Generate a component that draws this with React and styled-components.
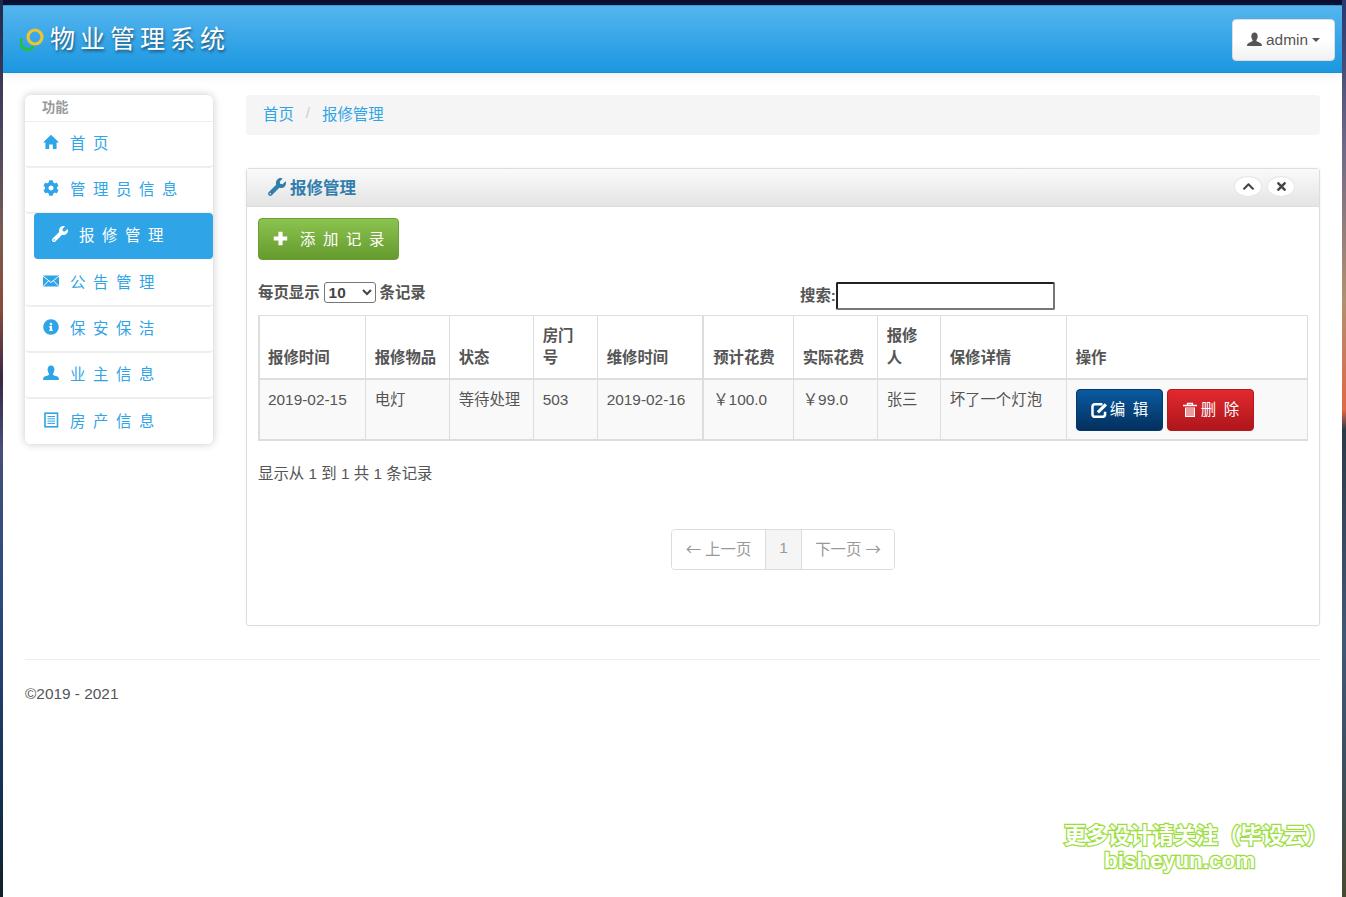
import React from 'react';
import styled, { createGlobalStyle } from 'styled-components';
import { FaCog, FaWrench, FaInfoCircle, FaChevronUp, FaTimes } from 'react-icons/fa';

const Global = createGlobalStyle`
  html, body { margin: 0; padding: 0; height: 100%; }
  body {
    font-family: "Liberation Sans", "Noto Sans CJK SC", sans-serif;
    font-size: 15.4px;
    color: #555;
    overflow: hidden;
    background: #0b1133;
  }
`;
const Desk = styled.div`
  padding: 5px 4px 0 3px;
  height: 897px;
  box-sizing: border-box;
  position: relative;
  background:
    linear-gradient(180deg, #222a50 0, #50485f 150px, #7a5a50 230px, #8a4a3a 310px, #382848 380px, #46507a 450px, #2a4a80 600px, #143050 800px, #10202a 897px) left / 3px 100% no-repeat,
    linear-gradient(180deg, #2a3a70 0, #706a88 150px, #b09070 300px, #e06848 410px, #2a3a48 430px, #37485c 520px, #405878 640px, #3c5060 760px, #4a4a30 897px) right / 4px 100% no-repeat;
`;
const Win = styled.div`
  background: #fff;
  height: 892px;
`;
const Header = styled.header`
  height: 68px;
  box-sizing: border-box;
  background: linear-gradient(180deg, #55b5ee 0%, #1b97e1 100%);
  border-top: 1px solid #2b9ce0;
  border-bottom: 1px solid #178ed6;
  box-shadow: 0 2px 10px rgba(0,0,0,.08);
  display: flex;
  align-items: center;
  justify-content: space-between;
  padding: 0 7px 0 17px;
`;
const Brand = styled.div`
  display: flex;
  align-items: center;
  gap: 4px;
`;
const BrandName = styled.span`
  font-family: "Noto Sans CJK SC", serif;
  font-size: 25px;
  line-height: 34px;
  letter-spacing: 5px;
  padding-bottom: 4px;
  color: #fff;
  text-shadow: 1px 2px 3px rgba(0,0,0,.5);
  font-weight: 400;
`;
const UserBtn = styled.button`
  height: 42px;
  width: 103px;
  margin-top: 1px;
  box-sizing: border-box;
  background: linear-gradient(180deg, #fff 0%, #fff 50%, #f1f1f1 100%);
  border: 1px solid #ddd;
  border-radius: 4px;
  display: flex;
  align-items: center;
  justify-content: center;
  gap: 4px;
  font: inherit;
  color: #555;
  padding: 0;
  svg { width: 15px; height: 15px; flex: none; }
`;
const Caret = styled.i`
  width: 0;
  height: 0;
  border-left: 4px solid transparent;
  border-right: 4px solid transparent;
  border-top: 4px solid #555;
`;
const Layout = styled.div`
  display: flex;
  align-items: flex-start;
  gap: 33px;
  padding: 22px 22px 0;
`;
const Side = styled.aside`
  width: 188px;
  flex: none;
  background: #fff;
  border-radius: 6px;
  box-shadow: 0 0 8px rgba(0,0,0,.22);
  overflow: hidden;
`;
const SideHead = styled.div`
  height: 26px;
  line-height: 26px;
  padding-left: 17px;
  font-size: 13.2px;
  font-weight: 700;
  color: #999;
  border-bottom: 1px solid #eee;
`;
const SideItem = styled.a`
  display: flex;
  align-items: center;
  gap: 11px;
  height: 46px;
  box-sizing: border-box;
  padding: 0 0 4px 18px;
  margin: ${p => (p.$active ? '-1px 0 1px 9px' : '0')};
  letter-spacing: 7.6px;
  white-space: nowrap;
  color: ${p => (p.$active ? '#fff' : '#2fa4e7')};
  background: ${p => (p.$active ? '#2fa4e7' : '#fff')};
  border-radius: 4px;
  border-bottom: ${p => (p.$active ? '0' : '2px solid #eee')};
  &:nth-child(5) { height: 47px; }
  &:last-child { border-bottom: 0; height: 45px; }
  svg { flex: none; width: 16px; height: 16px; }
`;
const Main = styled.main`
  flex: 1;
  min-width: 0;
`;
const Crumbs = styled.nav`
  height: 40px;
  box-sizing: border-box;
  background: #f5f5f5;
  border-radius: 4px;
  display: flex;
  align-items: center;
  padding: 0 17px 4px;
  color: #2fa4e7;
`;
const CrumbSep = styled.span`
  color: #ccc;
  padding: 0 12px;
`;
const Panel = styled.section`
  margin-top: 33px;
  height: 458px;
  box-sizing: border-box;
  border: 1px solid #ddd;
  border-radius: 3px;
  box-shadow: 0 0 3px rgba(0,0,0,.06);
`;
const PanelHead = styled.div`
  height: 38px;
  box-sizing: border-box;
  display: flex;
  align-items: center;
  justify-content: space-between;
  padding: 0 24px 2px 21px;
  background: linear-gradient(180deg, #fafafa 0%, #e4e4e4 100%);
  border-bottom: 1px solid #ddd;
`;
const PanelTitle = styled.h2`
  margin: 0;
  display: flex;
  align-items: center;
  gap: 4px;
  font-size: 16.5px;
  font-weight: 700;
  color: #317eac;
  svg { width: 18px; height: 18px; }
`;
const RoundGroup = styled.div`
  display: flex;
  gap: 5px;
`;
const RoundBtn = styled.span`
  width: 28px;
  height: 21px;
  box-sizing: border-box;
  display: flex;
  align-items: center;
  justify-content: center;
  background: #fff;
  border: 1px solid #e6e6e6;
  border-radius: 50%;
  color: #444;
  svg { width: 13px; height: 13px; }
`;
const PanelBody = styled.div`
  padding: 11px;
`;
const AddBtn = styled.a`
  display: inline-flex;
  align-items: center;
  gap: 12px;
  width: 141px;
  height: 42px;
  box-sizing: border-box;
  padding: 0 0 3px 14px;
  color: #fff;
  letter-spacing: 7.6px;
  white-space: nowrap;
  background: linear-gradient(180deg, #8bc34f 0%, #659a2e 100%);
  border: 1px solid #6a9f31;
  border-radius: 4px;
  svg { width: 15px; height: 15px; flex: none; margin-top: 2px; }
`;
const Controls = styled.div`
  display: flex;
  align-items: flex-start;
  margin-top: 22px;
  height: 33px;
  font-weight: 700;
  color: #555;
`;
const LengthBlock = styled.label`
  width: 542px;
  display: flex;
  align-items: center;
  gap: 4px;
  height: 21px;
`;
const ControlText = styled.span`
  padding-bottom: 4px;
`;
const LenSelect = styled.select`
  width: 52px;
  height: 21px;
  box-sizing: border-box;
  font: 700 15.4px "Liberation Sans", sans-serif;
  color: #444;
  background: #fff;
  border: 1px solid #767676;
  border-radius: 3px;
`;
const SearchBlock = styled.label`
  display: flex;
  align-items: center;
  height: 28px;
`;
const SearchInput = styled.input`
  width: 219px;
  height: 28px;
  box-sizing: border-box;
  margin: 0;
  padding: 1px 2px;
  background: #fff;
  border: 2px solid;
  border-color: #222 #777 #777 #222;
  border-radius: 2px;
`;
const Table = styled.table`
  width: 1049px;
  table-layout: fixed;
  border-collapse: collapse;
  border: 2px solid #ddd;
  border-top-width: 1px;
  border-right-width: 1px;
  line-height: 22px;
`;
const Th = styled.th`
  text-align: left;
  vertical-align: bottom;
  padding: 9px 8.8px 9px 9.2px;
  font-weight: 700;
  color: #555;
  background: #fff;
  border: 1px solid #ddd;
  border-bottom: 2px solid #ddd;
  border-left-width: ${p => (p.$thick ? '2px' : '1px')};
  &:first-child { padding-left: 8px; }
`;
const Td = styled.td`
  vertical-align: top;
  padding: 9px 8.8px 8px 9.2px;
  background: #f9f9f9;
  border: 1px solid #ddd;
  color: #555;
  border-left-width: ${p => (p.$thick ? '2px' : '1px')};
  height: 42px;
  &:first-child { padding-left: 8px; }
`;
const ActionCell = styled.div`
  display: flex;
  gap: 4px;
`;
const RowBtn = styled.a`
  width: 87px;
  height: 42px;
  box-sizing: border-box;
  display: inline-flex;
  align-items: center;
  justify-content: center;
  gap: 3px;
  color: #fff;
  letter-spacing: 7.6px;
  white-space: nowrap;
  padding-left: 8px;
  border-radius: 4px;
  background: ${p => (p.$danger
    ? 'linear-gradient(180deg, #e2292f 0%, #ae161b 100%)'
    : 'linear-gradient(180deg, #0a5aa0 0%, #03305e 100%)')};
  border: 1px solid ${p => (p.$danger ? '#b5191e' : '#03386c')};
  svg { width: 16px; height: 16px; flex: none; }
`;
const Info = styled.div`
  margin-top: 22px;
  line-height: 22px;
  color: #555;
`;
const PagerRow = styled.div`
  display: flex;
  justify-content: center;
  margin-top: 44px;
`;
const Pager = styled.ul`
  display: flex;
  margin: 0;
  padding: 0;
  list-style: none;
  height: 41px;
  box-sizing: border-box;
  border: 1px solid #ddd;
  border-radius: 4px;
  color: #999;
  overflow: hidden;
`;
const PagerItem = styled.li`
  width: ${p => p.$w}px;
  display: flex;
  align-items: center;
  justify-content: center;
  gap: 4px;
  padding-bottom: 3px;
  background: ${p => (p.$current ? '#f5f5f5' : '#fff')};
  border-left: ${p => (p.$first ? '0' : '1px solid #ddd')};
  box-sizing: border-box;
`;
const Arrow = styled.span`
  font-family: "Noto Sans CJK SC", sans-serif;
`;
const Rule = styled.hr`
  margin: 33px 0 0;
  border: 0;
  border-top: 1px solid #eee;
`;
const Foot = styled.footer`
  margin-top: 23px;
  line-height: 22px;
  color: #555;
`;
const FooterWrap = styled.div`
  padding: 0 22px;
`;
const Watermark = styled.div`
  position: absolute;
  left: 1064px;
  top: 819px;
  width: 256px;
  font-family: "Noto Sans CJK SC", sans-serif;
  font-weight: 700;
  color: #fff;
  -webkit-text-stroke: 2.5px #9ade3c;
  paint-order: stroke fill;
  white-space: nowrap;
`;
const WmLine = styled.div`
  font-size: 22px;
  line-height: 29px;
`;
const WmUrl = styled.div`
  font-family: "Liberation Sans", sans-serif;
  font-size: 22.5px;
  line-height: 26px;
  padding-left: 40px;
`;

const Home = () => (
  <svg viewBox="0 0 16 16" fill="currentColor"><path d="M8 .8 16 8.4h-2.4V15H9.8v-4.6H6.2V15H2.4V8.4H0z" /></svg>
);
const Mail = () => (
  <svg viewBox="0 0 16 16"><rect y="2.5" width="16" height="11" fill="currentColor" /><path d="M0 3l8 6.5L16 3M0 13.500l5.800-6M16 13.500l-5.800-6" fill="none" stroke="#fff" strokeWidth="1" /></svg>
);
const Bust = () => (
  <svg viewBox="0 0 16 16" fill="currentColor"><path d="M8 .5c2.400 0 3.500 2 3.400 4.300-.1 2-1 3.300-1.500 4.100 0 1 1.200 1.500 3.100 2.200 2 .8 3 1.400 3 3.900H0c0-2.500 1-3.100 3-3.900 1.900-.7 3.100-1.200 3.100-2.200-.5-.8-1.400-2.100-1.500-4.100C4.500 2.500 5.600.5 8 .5z" /></svg>
);
const Ledger = () => (
  <svg viewBox="0 0 16 16" fill="none" stroke="currentColor"><rect x="2" y="1.200" width="12.500" height="13.600" strokeWidth="1.600" /><path d="M4.500 4.500h7.500M4.500 6.800h7.500M4.500 9.100h7.500M4.500 11.400h7.500" strokeWidth="1" /></svg>
);
const Plus = () => (
  <svg viewBox="0 0 16 16" fill="currentColor"><path d="M5.800.8h4.400v5h5v4.400h-5v5H5.800v-5h-5V5.800h5z" /></svg>
);
const EditIcon = () => (
  <svg viewBox="0.5 1 14 14" fill="none" stroke="currentColor"><path d="M10.500 3H4Q1.800 3 1.800 5.200v6.600Q1.800 14 4 14h6.600q2.200 0 2.200-2.200V9.500" strokeWidth="2.200" /><path d="M6.500 10l7-7" strokeWidth="2.800" /></svg>
);
const TrashIcon = () => (
  <svg viewBox="0 0 16 16" fill="none" stroke="currentColor"><path d="M1 3.500h14M5.500 3.500V1.500h5v2" strokeWidth="1.300" /><path d="M3 5.500h10V15H3z" fill="currentColor" stroke="none" /><path d="M5 6v8M7 6v8M9 6v8M11 6v8" stroke="#d0232a" strokeWidth=".9" /></svg>
);
const Logo = () => (
  <svg width="26" height="26" viewBox="0 0 26 26" fill="none">
    <path d="M1.800 12.500A7 7 0 0 0 13.500 20.500" stroke="#22c03c" strokeWidth="3" />
    <circle cx="15" cy="11" r="7" stroke="#eec52e" strokeWidth="3.200" />
  </svg>
);

const menu = [
  [Home, '首页'],
  [FaCog, '管理员信息'],
  [FaWrench, '报修管理', true],
  [Mail, '公告管理'],
  [FaInfoCircle, '保安保洁'],
  [Bust, '业主信息'],
  [Ledger, '房产信息'],
];
const cols = [106, 84, 84, 64, 106, 90, 84, 63, 126, 241];
const heads = ['报修时间', '报修物品', '状态', '房门号', '维修时间', '预计花费', '实际花费', '报修人', '保修详情', '操作'];
const cells = ['2019-02-15', '电灯', '等待处理', '503', '2019-02-16', '￥100.0', '￥99.0', '张三', '坏了一个灯泡'];

export default function App() {
  return (
    <Desk>
      <Global />
      <Win>
        <Header>
          <Brand><Logo /><BrandName>物业管理系统</BrandName></Brand>
          <UserBtn><Bust />admin <Caret /></UserBtn>
        </Header>
        <Layout>
          <Side>
            <SideHead>功能</SideHead>
            {menu.map(([Icon, label, active]) => (
              <SideItem key={label} $active={active}><Icon />{label}</SideItem>
            ))}
          </Side>
          <Main>
            <Crumbs>首页<CrumbSep>/</CrumbSep>报修管理</Crumbs>
            <Panel>
              <PanelHead>
                <PanelTitle><FaWrench />报修管理</PanelTitle>
                <RoundGroup>
                  <RoundBtn><FaChevronUp /></RoundBtn>
                  <RoundBtn><FaTimes /></RoundBtn>
                </RoundGroup>
              </PanelHead>
              <PanelBody>
                <AddBtn><Plus />添加记录</AddBtn>
                <Controls>
                  <LengthBlock>
                    <ControlText>每页显示</ControlText>
                    <LenSelect defaultValue="10"><option>10</option><option>25</option></LenSelect>
                    <ControlText>条记录</ControlText>
                  </LengthBlock>
                  <SearchBlock><ControlText>搜索:</ControlText><SearchInput type="text" /></SearchBlock>
                </Controls>
                <Table>
                  <colgroup>{cols.map((w, i) => <col key={i} style={{ width: w }} />)}</colgroup>
                  <thead>
                    <tr>{heads.map((h, i) => <Th key={h} $thick={i === 5}>{h}</Th>)}</tr>
                  </thead>
                  <tbody>
                    <tr>
                      {cells.map((c, i) => <Td key={i} $thick={i === 5}>{c}</Td>)}
                      <Td>
                        <ActionCell>
                          <RowBtn><EditIcon />编辑</RowBtn>
                          <RowBtn $danger><TrashIcon />删除</RowBtn>
                        </ActionCell>
                      </Td>
                    </tr>
                  </tbody>
                </Table>
                <Info>显示从 1 到 1 共 1 条记录</Info>
                <PagerRow>
                  <Pager>
                    <PagerItem $first $w={93}><Arrow>←</Arrow>上一页</PagerItem>
                    <PagerItem $current $w={36}>1</PagerItem>
                    <PagerItem $w={93}>下一页<Arrow>→</Arrow></PagerItem>
                  </Pager>
                </PagerRow>
              </PanelBody>
            </Panel>
          </Main>
        </Layout>
        <FooterWrap>
          <Rule />
          <Foot>©2019 - 2021</Foot>
        </FooterWrap>
      </Win>
      <Watermark>
        <WmLine>更多设计请关注（毕设云）</WmLine>
        <WmUrl>bisheyun.com</WmUrl>
      </Watermark>
    </Desk>
  );
}
